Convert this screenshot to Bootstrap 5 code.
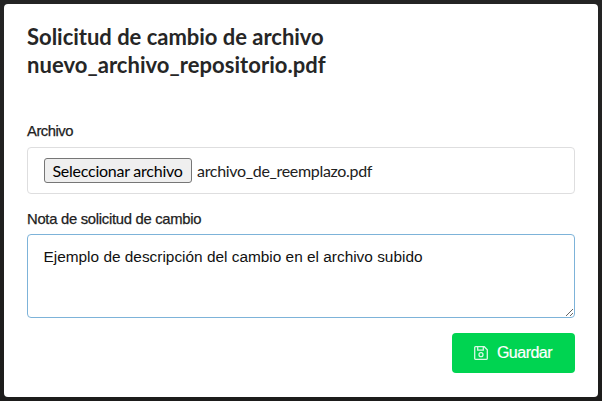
<!DOCTYPE html>
<html lang="es">
<head>
<meta charset="utf-8">
<meta name="viewport" content="width=device-width, initial-scale=1">
<title>Solicitud de cambio de archivo</title>
<link href="https://cdn.jsdelivr.net/npm/bootstrap@5.3.0/dist/css/bootstrap.min.css" rel="stylesheet">
<style>
  body { background: linear-gradient(#242424, #1d1c1b); font-family: Lato, sans-serif; color: #212121; height: 401px; padding: 4px; overflow: hidden; }
  .dialog-box { height: 393px; border-radius: 4px; padding: 19px 23px 24px; }
  .dialog-title { font-size: 22px; font-weight: 700; line-height: 28px; color: #262626; margin-bottom: 42px; letter-spacing: -.02px; }
  .title-file { letter-spacing: .04px; }
  .field-label { font: 14.8px/20px "Liberation Sans", sans-serif; letter-spacing: -.28px; -webkit-text-stroke: .25px #212121; margin-bottom: 6px; }
  .label-short { letter-spacing: -.47px; }
  .file-field { height: 47px; border: 1px solid #dededf; border-radius: 4px; padding: 0 16px; font-size: 16px; letter-spacing: -.32px; margin-bottom: 15px; }
  .file-name { padding-top: 1px; }
  .file-button { font: 16px/19px Lato, sans-serif; letter-spacing: -.24px; color: #000; background: #efefef; border: 1px solid #767676; border-radius: 3px; width: 148px; height: 25px; padding: 0 1px 0 0; margin-right: 5px; }
  .note-field, .note-field:focus { height: 84px; border: 1px solid #7db3d9; border-radius: 4px; padding: 12px 15.5px; font: 15.4px/20px "Liberation Sans", sans-serif; color: #111; box-shadow: none; margin: -1px 0 15px; }
  .btn-save, .btn-save:hover { width: 123px; height: 40px; background: #00d451; color: #fff; border: 0; border-radius: 4px; font: 16px/20px "Liberation Sans", sans-serif; letter-spacing: -.5px; padding: 0; -webkit-text-stroke: .2px #fff; }
  .save-icon { margin-right: 1px; margin-left: -1px; }
</style>
</head>
<body>
<main class="dialog-box bg-white d-flex flex-column">
  <h1 class="dialog-title">Solicitud de cambio de archivo<br><span class="title-file">nuevo_archivo_repositorio.pdf</span></h1>
  <label class="field-label label-short" for="pick">Archivo</label>
  <div class="file-field d-flex align-items-center">
    <button type="button" id="pick" class="file-button">Seleccionar archivo</button>
    <span class="file-name">archivo_de_reemplazo.pdf</span>
  </div>
  <label class="field-label" for="note">Nota de solicitud de cambio</label>
  <textarea id="note" class="form-control note-field flex-shrink-0" spellcheck="false">Ejemplo de descripción del cambio en el archivo subido</textarea>
  <button type="button" class="btn btn-save align-self-end d-flex align-items-center justify-content-center gap-2">
    <svg class="save-icon" width="14" height="14" viewBox="0 0 14 14" fill="none" stroke="#fff" stroke-opacity=".85" stroke-width="1.3"><path d="M.7 1.5q0-.8.8-.8h8.8l3 3v8.8q0 .8-.8.8h-11q-.8 0-.8-.8zM3.7.9v3.3h5.6V.9"/><circle cx="7" cy="8.7" r="2"/></svg>
    <span>Guardar</span>
  </button>
</main>
<script src="https://cdn.jsdelivr.net/npm/bootstrap@5.3.0/dist/js/bootstrap.bundle.min.js"></script>
</body>
</html>
